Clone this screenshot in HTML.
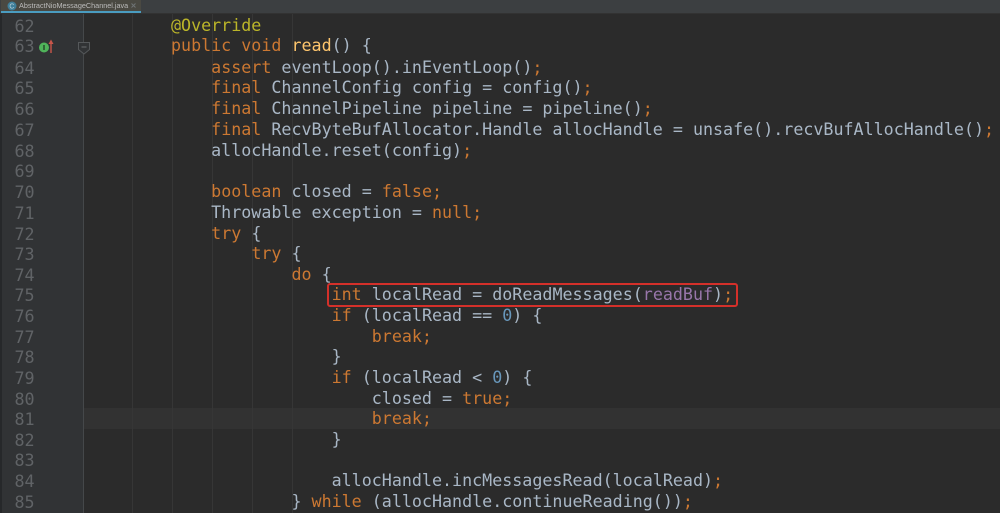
<!DOCTYPE html>
<html>
<head>
<meta charset="utf-8">
<style>
html,body{margin:0;padding:0;width:1000px;height:513px;overflow:hidden;background:#2b2b2b}
#tabs{position:absolute;left:0;top:0;width:1000px;height:13px;background:#3c3f41;border-bottom:1px solid #323232}
#tab{position:absolute;left:1px;top:0;width:140px;height:11px;background:#4a4942}
#tabline{position:absolute;left:1px;top:11px;width:140px;height:2px;background:#4a9cc0}
#tabtext{position:absolute;left:19px;top:0;font:7.25px/12px "Liberation Sans",sans-serif;color:#bbbbbb;white-space:nowrap;filter:blur(.3px)}
#gutter{position:absolute;left:0;top:14px;width:83px;height:499px;background:#313335;border-right:1px solid #45484a;box-sizing:content-box}
#gedge{position:absolute;left:0;top:14px;width:1.5px;height:499px;background:#26282a}
#cur{position:absolute;left:84px;top:408px;width:916px;height:21px;background:#323232}
.g{position:absolute;top:14px;width:1px;height:499px;background:#363636}
#code{position:absolute;left:0;top:0;width:1000px;height:513px;filter:blur(.35px)}
.n,.c{position:absolute;font-family:"DejaVu Sans Mono","Liberation Mono",monospace;white-space:pre;font-size:16.68px;line-height:20.7px;height:20.7px}
.n{left:14.5px;color:#606366;font-size:16.7px}
.c{left:171px;color:#a9b7c6}
.k{color:#cc7832}.v{color:#9876aa}.a{color:#bbb529}.d{color:#6897bb}.m{color:#ffc66d}
#box{position:absolute;left:327px;top:283px;width:407px;height:20px;border:2px solid #d4302a;border-radius:3px;box-sizing:content-box}
svg{position:absolute;overflow:visible}
</style>
</head>
<body>
<div id="tabs"></div>
<div id="tab"></div>
<div id="tabline"></div>
<div id="tabtext">AbstractNioMessageChannel.java</div>
<svg style="left:6px;top:0" width="12" height="11"><circle cx="6" cy="6" r="4.5" fill="#3f7f9a"/><text x="3.4" y="8.5" font-family="Liberation Sans,sans-serif" font-size="7" fill="#bcd2da">C</text></svg>
<svg style="left:130px;top:2px" width="7" height="7"><path d="M1.5 1.5L5.5 5.5M5.5 1.5L1.5 5.5" stroke="#6f7375" stroke-width="1"/></svg>
<div id="gutter"></div>
<div id="gedge"></div>
<div id="cur"></div>
<div class="g" style="left:132px"></div>
<div class="g" style="left:172px"></div>
<div class="g" style="left:212px"></div>
<div class="g" style="left:252px"></div>
<div class="g" style="left:292px"></div>
<svg style="left:38px;top:38px" width="18" height="16"><circle cx="6" cy="9.5" r="5" fill="#4fb35a"/><path d="M6 7V12" stroke="#1f3a22" stroke-width="1.3"/><path d="M13 15V3" stroke="#c9564a" stroke-width="1.4"/><path d="M10.5 6L13 1.5L15.5 6Z" fill="#c9564a"/></svg>
<svg style="left:78px;top:42px" width="13" height="13"><path d="M0.5 0.5H11.5V7.5L6 12L0.5 7.5Z" fill="#313335" stroke="#55585a"/><path d="M3.5 5H8.5" stroke="#6a6d70"/></svg>

<div id="code">
<div class="n" style="top:16px">62</div>
<div class="n" style="top:36.2px">63</div>
<div class="n" style="top:58px">64</div>
<div class="n" style="top:77.7px">65</div>
<div class="n" style="top:99.4px">66</div>
<div class="n" style="top:120.1px">67</div>
<div class="n" style="top:140.8px">68</div>
<div class="n" style="top:161px">69</div>
<div class="n" style="top:182.2px">70</div>
<div class="n" style="top:202.9px">71</div>
<div class="n" style="top:223.6px">72</div>
<div class="n" style="top:244.3px">73</div>
<div class="n" style="top:265px">74</div>
<div class="n" style="top:284.7px">75</div>
<div class="n" style="top:306.4px">76</div>
<div class="n" style="top:327.1px">77</div>
<div class="n" style="top:346.8px">78</div>
<div class="n" style="top:367.5px">79</div>
<div class="n" style="top:389.2px">80</div>
<div class="n" style="top:408.9px">81</div>
<div class="n" style="top:429.6px">82</div>
<div class="n" style="top:450.3px">83</div>
<div class="n" style="top:471px">84</div>
<div class="n" style="top:492px">85</div>

<div class="c" style="top:16px"><span class="a">@Override</span></div>
<div class="c" style="top:36.2px"><span class="k">public void</span> <span class="m">read</span>() {</div>
<div class="c" style="top:58px">    <span class="k">assert</span> eventLoop().inEventLoop()<span class="k">;</span></div>
<div class="c" style="top:77.7px">    <span class="k">final</span> ChannelConfig config = config()<span class="k">;</span></div>
<div class="c" style="top:99.4px">    <span class="k">final</span> ChannelPipeline pipeline = pipeline()<span class="k">;</span></div>
<div class="c" style="top:120.1px">    <span class="k">final</span> RecvByteBufAllocator.Handle allocHandle = unsafe().recvBufAllocHandle()<span class="k">;</span></div>
<div class="c" style="top:140.8px">    allocHandle.reset(config)<span class="k">;</span></div>
<div class="c" style="top:182.2px">    <span class="k">boolean</span> closed = <span class="k">false;</span></div>
<div class="c" style="top:202.9px">    Throwable exception = <span class="k">null;</span></div>
<div class="c" style="top:223.6px">    <span class="k">try</span> {</div>
<div class="c" style="top:244.3px">        <span class="k">try</span> {</div>
<div class="c" style="top:265px">            <span class="k">do</span> {</div>
<div class="c" style="top:284.7px">                <span class="k">int</span> localRead = doReadMessages(<span class="v">readBuf</span>)<span class="k">;</span></div>
<div class="c" style="top:306.4px">                <span class="k">if</span> (localRead == <span class="d">0</span>) {</div>
<div class="c" style="top:327.1px">                    <span class="k">break;</span></div>
<div class="c" style="top:346.8px">                }</div>
<div class="c" style="top:367.5px">                <span class="k">if</span> (localRead &lt; <span class="d">0</span>) {</div>
<div class="c" style="top:389.2px">                    closed = <span class="k">true;</span></div>
<div class="c" style="top:408.9px">                    <span class="k">break;</span></div>
<div class="c" style="top:429.6px">                }</div>
<div class="c" style="top:471px">                allocHandle.incMessagesRead(localRead)<span class="k">;</span></div>
<div class="c" style="top:492px">            } <span class="k">while</span> (allocHandle.continueReading())<span class="k">;</span></div>
</div>
<div id="box"></div>
</body>
</html>
